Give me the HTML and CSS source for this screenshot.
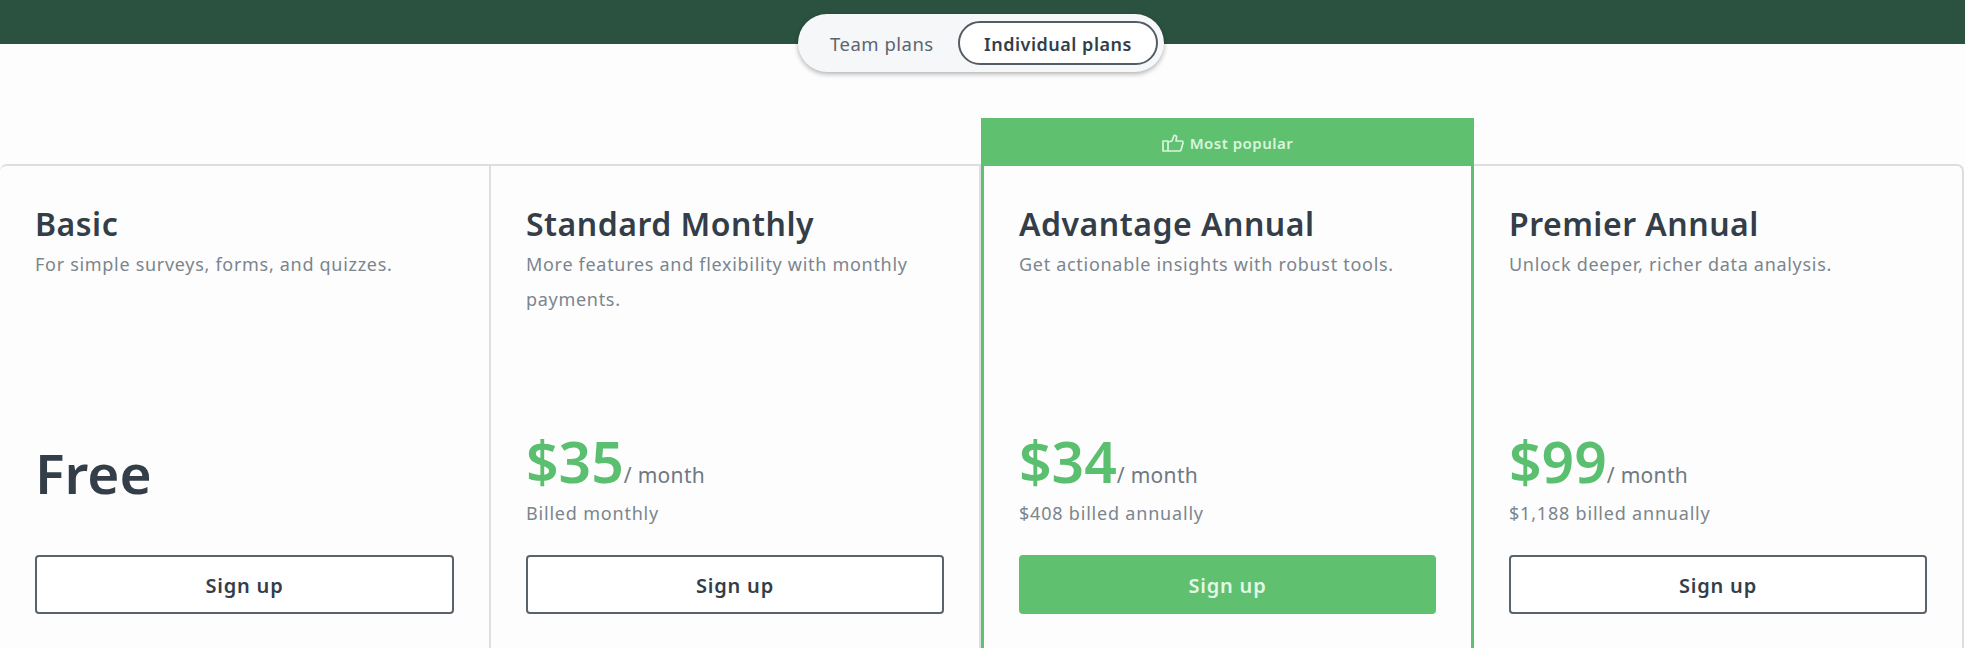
FILE: index.html
```html
<!DOCTYPE html>
<html lang="en">
<head>
    <meta charset="UTF-8">
    <title>Plans and pricing</title>
    <link rel="stylesheet" href="styles.css">
</head>
<body>
    <header class="hero-band">
        <div class="plan-switch">
            <button class="switch-btn">Team plans</button>
            <button class="switch-btn active">Individual plans</button>
        </div>
    </header>

    <section class="plans">
        <div class="plan">
            <h2>Basic</h2>
            <p class="desc">For simple surveys, forms, and quizzes.</p>
            <div class="price free">Free</div>
            <p class="billed">&nbsp;</p>
            <button class="signup">Sign up</button>
        </div>

        <div class="plan">
            <h2>Standard Monthly</h2>
            <p class="desc">More features and flexibility with monthly payments.</p>
            <div class="price"><span class="amount">$35</span><span class="per">/ month</span></div>
            <p class="billed">Billed monthly</p>
            <button class="signup">Sign up</button>
        </div>

        <div class="plan popular">
            <div class="ribbon">
                <svg width="22" height="18" viewBox="0 0 22 18" fill="none" stroke="#d9f5dc" stroke-width="1.7" stroke-linejoin="round">
                    <rect x="1" y="7" width="5" height="10"/>
                    <path d="M6 8 L10 7 L12 1.5 C14 1 15 2.5 14.5 4 L14 7 H20 C21 7 21 8 21 9 L19 16 C18.8 16.7 18.2 17 17.5 17 H6"/>
                </svg>
                <span>Most popular</span>
            </div>
            <h2>Advantage Annual</h2>
            <p class="desc">Get actionable insights with robust tools.</p>
            <div class="price"><span class="amount">$34</span><span class="per">/ month</span></div>
            <p class="billed">$408 billed annually</p>
            <button class="signup primary">Sign up</button>
        </div>

        <div class="plan">
            <h2>Premier Annual</h2>
            <p class="desc">Unlock deeper, richer data analysis.</p>
            <div class="price"><span class="amount">$99</span><span class="per">/ month</span></div>
            <p class="billed">$1,188 billed annually</p>
            <button class="signup">Sign up</button>
        </div>
    </section>
</body>
</html>
```

FILE: styles.css
```css
html, body {
    height: 100%;
    overflow: hidden;
}
body {
    margin: 0;
    font-family: "Noto Sans", Arial, sans-serif;
    background-color: #fdfdfd;
    color: #333e48;
}
.hero-band {
    height: 44px;
    background-color: #2b5141;
}
.plan-switch {
    display: flex;
    align-items: center;
    justify-content: space-between;
    box-sizing: border-box;
    width: 366px;
    height: 58px;
    margin-left: 798px;
    padding: 0 6px 0 32px;
    position: relative;
    top: 14px;
    background-color: #f6f7f8;
    border-radius: 29px;
    box-shadow: 0 2px 5px rgba(0,0,0,0.3);
}
.switch-btn {
    border: none;
    background: none;
    padding: 0;
    font-family: inherit;
    font-size: 18.5px;
    letter-spacing: 0.5px;
    color: #5c6570;
}
.switch-btn.active {
    box-sizing: border-box;
    width: 200px;
    height: 44px;
    padding-top: 1px;
    background-color: #fff;
    border: 2px solid #545c66;
    border-radius: 22px;
    font-size: 18px;
    letter-spacing: 0.5px;
    font-weight: 600;
    color: #333e48;
}
.plans {
    display: grid;
    grid-template-columns: 491px 490px 493px 488px;
    margin-top: 120px;
    border-top: 2px solid #dcdedf;
    border-right: 2px solid #dcdedf;
    border-radius: 7px 7px 0 0;
    height: 600px;
    width: 1964px;
    box-sizing: border-box;
}
.plan {
    position: relative;
    box-sizing: border-box;
    padding: 36px 35px 0;
    border-right: 2px solid #dcdedf;
}
.plan:last-child {
    border-right: none;
}
.plan h2 {
    margin: 0;
    font-size: 32px;
    line-height: 44px;
    letter-spacing: 0.5px;
    font-weight: 600;
}
.desc {
    margin: 0;
    height: 184px;
    padding-top: 1px;
    font-size: 18px;
    line-height: 35px;
    letter-spacing: 0.7px;
    color: #7b858d;
}
.price {
    height: 60px;
    display: flex;
    align-items: baseline;
}
.amount {
    font-size: 57px;
    line-height: 60px;
    font-weight: 600;
    color: #5abf6e;
}
.per {
    font-size: 21px;
    letter-spacing: 0.3px;
    color: #6f7983;
}
.free {
    padding-top: 16px;
    height: 44px;
    font-size: 55px;
    line-height: 52px;
    font-weight: 600;
    color: #333e48;
}
.billed {
    margin: 0;
    padding-top: 7px;
    height: 57px;
    font-size: 18px;
    line-height: 30px;
    letter-spacing: 0.8px;
    color: #7b858d;
}
.signup {
    display: block;
    box-sizing: border-box;
    width: 100%;
    height: 59px;
    padding-top: 2px;
    background-color: #fff;
    border: 2px solid #5a626b;
    border-radius: 4px;
    font-family: inherit;
    font-size: 20px;
    letter-spacing: 0.8px;
    font-weight: 600;
    color: #333e48;
}
.signup.primary {
    background-color: #5fc070;
    border-color: #5fc070;
    color: #e4f7e7;
}
.plan.popular {
    border-left: 3px solid #5fc070;
    border-right: 3px solid #5fc070;
    padding-left: 35px;
    padding-right: 35px;
}
.ribbon {
    position: absolute;
    top: -48px;
    left: -3px;
    right: -3px;
    height: 48px;
    padding-top: 2px;
    box-sizing: border-box;
    display: flex;
    align-items: center;
    justify-content: center;
    gap: 6px;
    background-color: #5fc070;
    color: #d9f5dc;
    font-size: 15px;
    letter-spacing: 0.5px;
    font-weight: 600;
}
```
